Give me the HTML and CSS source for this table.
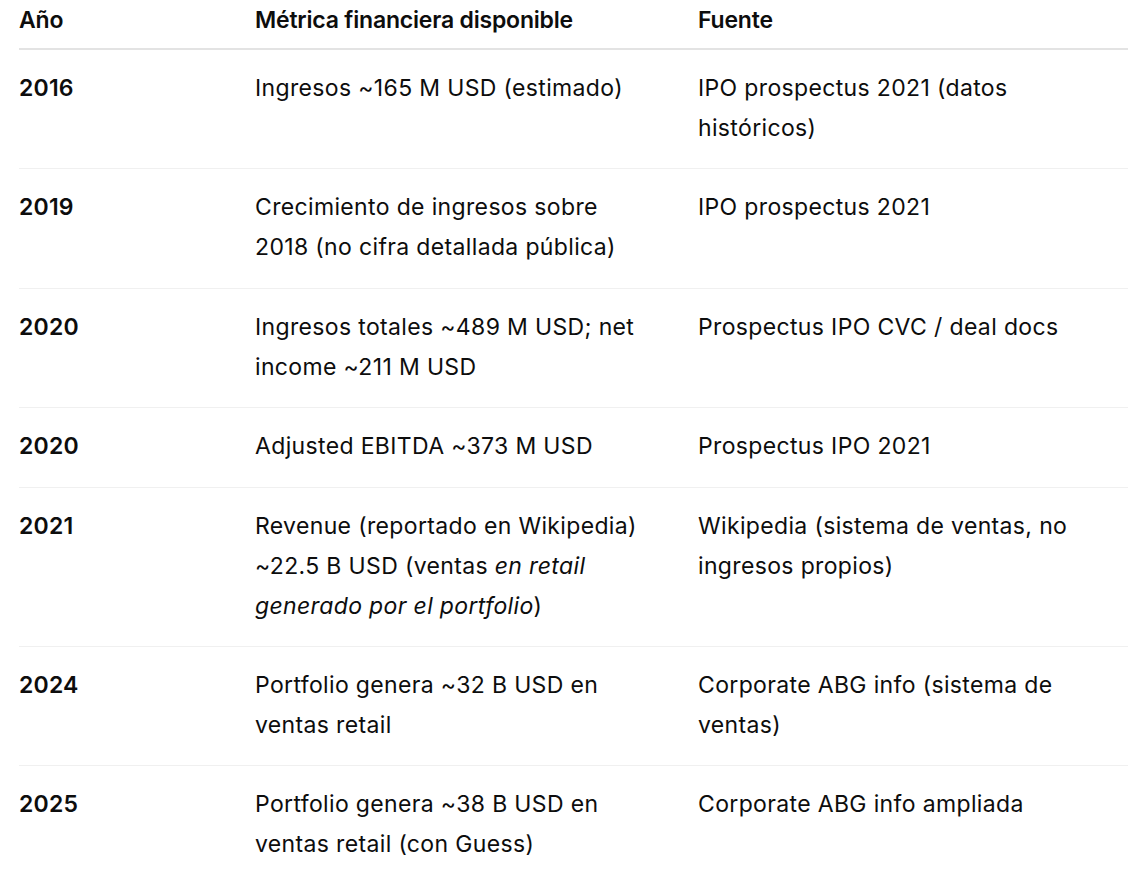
FILE: index.html
```html
<!DOCTYPE html>
<html lang="es">
<head>
<meta charset="utf-8">
<title>Métricas</title>
<link rel="stylesheet" href="styles.css">
</head>
<body>
<table class="data">
  <colgroup>
    <col class="c1"><col class="c2"><col class="c3">
  </colgroup>
  <thead>
    <tr><th>Año</th><th>Métrica financiera disponible</th><th>Fuente</th></tr>
  </thead>
  <tbody>
    <tr><td class="yr">2016</td><td>Ingresos ~165 M USD (estimado)</td><td>IPO prospectus 2021 (datos históricos)</td></tr>
    <tr><td class="yr">2019</td><td>Crecimiento de ingresos sobre 2018 (no cifra detallada pública)</td><td>IPO prospectus 2021</td></tr>
    <tr><td class="yr">2020</td><td>Ingresos totales ~489 M USD; net income ~211 M USD</td><td>Prospectus IPO CVC / deal docs</td></tr>
    <tr><td class="yr">2020</td><td>Adjusted EBITDA ~373 M USD</td><td>Prospectus IPO 2021</td></tr>
    <tr><td class="yr">2021</td><td>Revenue (reportado en Wikipedia) ~22.5 B USD (ventas <em>en retail generado por el portfolio</em>)</td><td>Wikipedia (sistema de ventas, no ingresos propios)</td></tr>
    <tr><td class="yr">2024</td><td>Portfolio genera ~32 B USD en ventas retail</td><td>Corporate ABG info (sistema de ventas)</td></tr>
    <tr><td class="yr">2025</td><td>Portfolio genera ~38 B USD en ventas retail (con Guess)</td><td>Corporate ABG info ampliada</td></tr>
  </tbody>
</table>
</body>
</html>
```
FILE: styles.css
```css
html, body {
  margin: 0;
  padding: 0;
  background: #ffffff;
}
body {
  font-family: Inter, "Noto Sans", "Liberation Sans", sans-serif;
  font-size: 23px;
  line-height: 40px;
  color: #0d0d0d;
}
.data {
  margin-left: 19px;
  width: 1109px;
  border-collapse: collapse;
  table-layout: fixed;
}
.c1 { width: 236px; }
.c2 { width: 443px; }
.c3 { width: 430px; }
.data th {
  text-align: left;
  font-weight: 600;
  letter-spacing: -0.2px;
  padding: 0 0 8px 0;
  border-bottom: 2px solid #e3e3e3;
  vertical-align: top;
}
.data td {
  padding: 18px 0 20.4px 0;
  vertical-align: top;
  letter-spacing: 0.35px;
  border-bottom: 1px solid #f0f0f0;
}
.data td:nth-child(2) { padding-right: 53px; }
.data td:nth-child(3) { padding-right: 38px; }
.data td.yr { font-weight: 600; letter-spacing: 0.2px; }
.data em { font-style: italic; }
```
